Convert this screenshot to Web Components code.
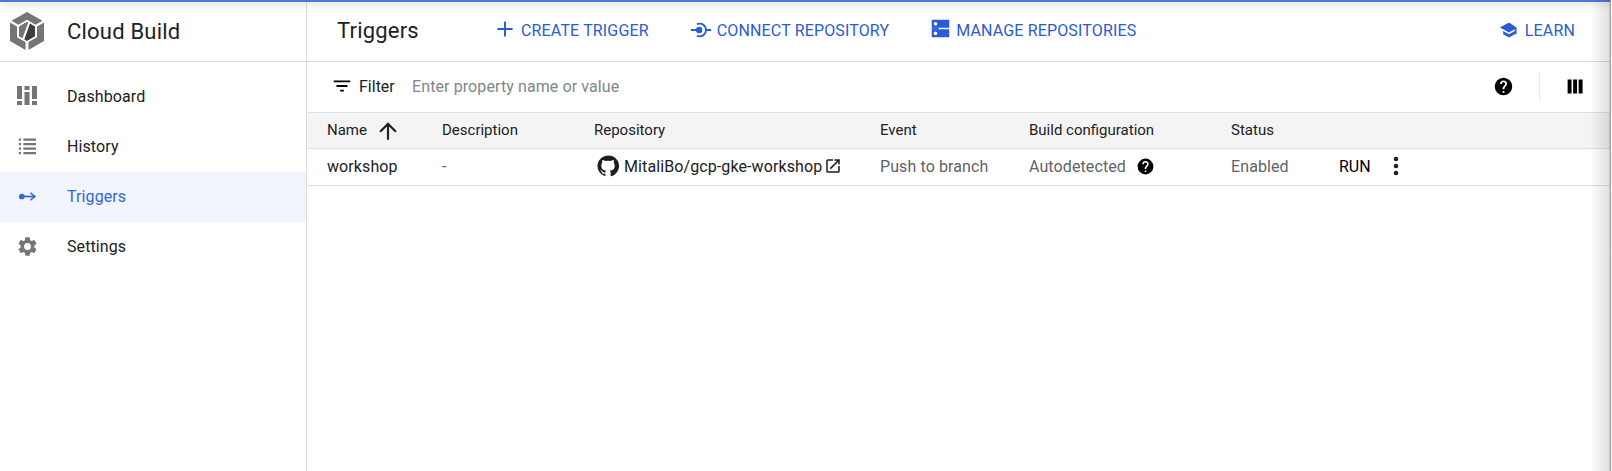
<!DOCTYPE html>
<html>
<head>
<meta charset="utf-8">
<style>
    html, body { margin: 0; height: 100%; background: #fff; overflow: hidden; }
    body { font-family: Roboto, "Liberation Sans", sans-serif; }
</style>
</head>
<body>
<gcb-app>
    <gcb-sidebar slot="side">
        <gcb-nav-item icon="dashboard" size="20" box="20" pad="17">Dashboard</gcb-nav-item>
        <gcb-nav-item icon="history" size="18" box="20" pad="18">History</gcb-nav-item>
        <gcb-nav-item icon="triggers" size="19" box="20" pad="18">Triggers</gcb-nav-item>
        <gcb-nav-item icon="settings" size="23" box="24" pad="16">Settings</gcb-nav-item>
    </gcb-sidebar>
    <gcb-toolbar slot="main"></gcb-toolbar>
    <gcb-filter slot="main"></gcb-filter>
    <gcb-table slot="main"></gcb-table>
</gcb-app>

<script>
const ICONS = {
    dashboard: `<path d="M0 0h5v13H0zM0 15h5v4H0zM7.500 0h5v4h-5zM7.500 6h5v13h-5zM15 0h5v13h-5zM15 15h5v4h-5z"/>`,
    history: `<path d="M1 1.800h2.400v2.400H1zM6 1.800h14v2.400H6zM1 6.800h2.400v2.400H1zM6 6.800h14v2.400H6zM1 11.800h2.400v2.400H1zM6 11.800h14v2.400H6zM1 16.800h2.400v2.400H1zM6 16.800h14v2.400H6z"/>`,
    triggers: `<circle cx="4" cy="10" r="3"/><path d="M4 9.100h14v1.800H4z"/><path d="M13.500 5.500l5.500 4.500-5.500 4.500-1-1.200 4-3.300-4-3.300z"/>`,
    settings: `<path d="M19.140 12.940c.04-.3.060-.61.060-.94s-.02-.64-.07-.94l2.030-1.580a.49.49 0 0 0 .12-.61l-1.920-3.320a.49.49 0 0 0-.59-.22l-2.390.96a7 7 0 0 0-1.620-.94l-.36-2.540a.48.480 0 0 0-.48-.41h-3.840a.48.480 0 0 0-.47.41l-.36 2.540c-.59.24-1.130.57-1.620.94l-2.390-.96a.49.49 0 0 0-.59.22L2.740 8.870a.48.480 0 0 0 .12.61l2.030 1.580c-.05.3-.09.63-.09.94s.02.64.07.94l-2.030 1.580a.49.49 0 0 0-.12.61l1.920 3.320c.12.22.37.29.59.22l2.390-.96c.5.38 1.030.7 1.620.94l.36 2.540c.05.24.24.41.48.41h3.840c.24 0 .44-.17.47-.41l.36-2.540a7 7 0 0 0 1.620-.94l2.390.96c.22.08.47 0 .59-.22l1.920-3.320a.48.480 0 0 0-.12-.61zM12 15.600a3.600 3.600 0 1 1 0-7.200 3.600 3.600 0 0 1 0 7.200z"/>`,
    help: `<path d="M12 2a10 10 0 1 0 0 20 10 10 0 0 0 0-20zm1 17h-2v-2h2zm2.070-7.750l-.9.920C13.450 12.900 13 13.500 13 15h-2v-.5c0-1.100.45-2.100 1.170-2.830l1.240-1.260A2 2 0 1 0 10 9H8a4 4 0 1 1 8 0c0 .88-.36 1.680-.93 2.250z"/>`,
    github: `<path d="M12 .5a11.500 11.500 0 0 0-3.640 22.410c.58.11.79-.25.79-.56v-2c-3.200.7-3.880-1.360-3.880-1.360-.52-1.330-1.280-1.690-1.280-1.690-1.040-.71.080-.7.080-.7 1.160.08 1.770 1.190 1.770 1.190 1.030 1.760 2.690 1.250 3.350.96.100-.75.400-1.250.730-1.540-2.550-.29-5.240-1.280-5.240-5.690 0-1.260.45-2.280 1.180-3.090-.12-.29-.51-1.460.11-3.050 0 0 .97-.31 3.160 1.180a11 11 0 0 1 5.760 0c2.190-1.490 3.160-1.180 3.160-1.180.63 1.590.23 2.760.11 3.050.74.81 1.180 1.830 1.180 3.090 0 4.420-2.690 5.390-5.260 5.680.41.360.78 1.060.78 2.130v3.160c0 .31.210.67.800.56A11.500 11.500 0 0 0 12 .5z"/>`,
    open: `<path d="M19 19H5V5h7V3H5a2 2 0 0 0-2 2v14a2 2 0 0 0 2 2h14a2 2 0 0 0 2-2v-7h-2zM14 3v2h3.590l-9.830 9.830 1.410 1.410L19 6.410V10h2V3z"/>`,
    plus: `<path d="M19 12.900h-6.100V19h-1.800v-6.100H5v-1.800h6.100V5h1.800v6.100H19z"/>`,
    connect: `<path d="M1 11h8v2H1zM18 11h5v2h-5z"/><circle cx="10" cy="12" r="3.500"/><path d="M7 4.800A8 8 0 1 1 7 19.200L8.100 17.500A6 6 0 1 0 8.100 6.500z"/>`,
    repos: `<path fill-rule="evenodd" d="M2 2h20v9.200H2zm4.300 2.500a2 2 0 1 0 0 4.200 2 2 0 0 0 0-4.200zM2 12.800h20V22H2zm4.300 2.500a2 2 0 1 0 0 4.200 2 2 0 0 0 0-4.200z"/><path d="M2 11h8v2H2z"/>`,
    learn: `<path d="M12 3L1 9l4 2.180v.01L12 15l7-3.820V17h2V9zM5 13.180v4L12 21l7-3.820v-4L12 17z"/>`,
    sort: `<path d="M4 12l1.410 1.410L11 7.830V20h2V7.830l5.580 5.590L20 12l-8-8z"/>`,
    filter: `<path d="M3 6h18v2H3zM6 11h12v2H6zM10 16h4v2h-4z"/>`,
    columns: `<path d="M3 4h4.500v16H3zM9.300 4h4.500v16H9.300zM15.600 4h4.500v16h-4.500z"/>`,
    more: `<circle cx="12" cy="5" r="2.300"/><circle cx="12" cy="12" r="2.300"/><circle cx="12" cy="19" r="2.300"/>`
};

function svgIcon(name, size, box = 24) {
    return `<svg width="${size}" height="${size}" viewBox="0 0 ${box} ${box}" fill="currentColor">${ICONS[name]}</svg>`;
}

class GcbApp extends HTMLElement {
    constructor() {
        super();
        this.attachShadow({ mode: "open" });
    }

    connectedCallback() {
        this.shadowRoot.innerHTML = `
            <style>
                :host {
                    display: grid;
                    grid-template-columns: 307px 1fr;
                    position: relative;
                    height: 471px;
                    overflow: hidden;
                    color: #202124;
                }

                .top {
                    position: absolute;
                    inset: 0 0 auto 0;
                    height: 2px;
                    background: #4a79d9;
                    box-shadow: 0 2px 6px rgba(60, 64, 67, .35);
                }

                .edge {
                    position: absolute;
                    inset: 0 0 0 auto;
                    width: 22px;
                    background: linear-gradient(to right, rgba(0, 0, 0, 0), rgba(0, 0, 0, .12) 88%, #5f6368 92%, #fff 95%);
                    pointer-events: none;
                }

                .side {
                    border-right: 1px solid #dadce0;
                }

                .main {
                    min-width: 0;
                }
            </style>
            <div class="side"><slot name="side"></slot></div>
            <div class="main"><slot name="main"></slot></div>
            <div class="top"></div>
            <div class="edge"></div>
        `;
    }
}

class GcbSidebar extends HTMLElement {
    constructor() {
        super();
        this.attachShadow({ mode: "open" });
    }

    connectedCallback() {
        this.shadowRoot.innerHTML = `
            <style>
                :host {
                    display: block;
                }

                .brand {
                    height: 62px;
                    box-sizing: border-box;
                    border-bottom: 1px solid #dadce0;
                    display: flex;
                    align-items: center;
                    padding: 1px 0 0 9px;
                    font-size: 22px;
                    letter-spacing: .2px;
                    color: #202124;
                }

                .brand svg {
                    margin-right: 22px;
                    flex: none;
                }

                nav {
                    padding-top: 10px;
                }
            </style>
            <div class="brand">
                <svg width="36" height="40" viewBox="0 0 36 40" fill="#757575">
                    <path d="M18 1l15.500 8.700-7 4L18 8.800 9.500 13.700l-7-4z"/>
                    <path d="M1 11.500l7 4v10.700l8.500 4.900V39L1 30z"/>
                    <path d="M35 11.500l-7 4v10.700l-8.500 4.900V39L35 30z"/>
                    <path d="M18 10.800l1.300.8-5.800 15.700-3.500-2V15.400z"/>
                    <path fill="#3c3c3c" d="M21 12.600l5 2.800v9.900l-8 4.600-2.700-1.500z"/>
                </svg>
                <span>Cloud Build</span>
            </div>
            <nav><slot></slot></nav>
        `;
    }
}

class GcbNavItem extends HTMLElement {
    constructor() {
        super();
        this.attachShadow({ mode: "open" });
    }

    connectedCallback() {
        const name = this.getAttribute("icon");
        const active = name === "triggers";
        const icon = svgIcon(name, this.getAttribute("size"), this.getAttribute("box"));
        this.shadowRoot.innerHTML = `
            <style>
                :host {
                    display: flex;
                    align-items: center;
                    height: 50px;
                    box-sizing: border-box;
                    padding-bottom: 2px;
                    font-size: 16px;
                    letter-spacing: .1px;
                    color: ${active ? "#3367d6" : "#202124"};
                    background: ${active ? "#f0f4fc" : "transparent"};
                }

                .ic {
                    width: 67px;
                    flex: none;
                    box-sizing: border-box;
                    padding-left: ${this.getAttribute("pad")}px;
                    display: flex;
                    color: ${active ? "#3367d6" : "#757575"};
                }
            </style>
            <span class="ic">${icon}</span>
            <slot></slot>
        `;
    }
}

class GcbAction extends HTMLElement {
    constructor() {
        super();
        this.attachShadow({ mode: "open" });
    }

    connectedCallback() {
        const size = this.getAttribute("size") || 20;
        const gap = this.getAttribute("gap") || 5;
        const lift = this.getAttribute("lift") || 1;
        this.shadowRoot.innerHTML = `
            <style>
                :host {
                    display: inline-flex;
                    align-items: center;
                    gap: ${gap}px;
                    font-size: 16px;
                    letter-spacing: .15px;
                    white-space: nowrap;
                    color: #2a5bd7;
                }

                svg {
                    flex: none;
                    margin-bottom: ${lift * 2}px;
                }
            </style>
            ${svgIcon(this.getAttribute("icon"), size)}
            <slot></slot>
        `;
    }
}

class GcbToolbar extends HTMLElement {
    constructor() {
        super();
        this.attachShadow({ mode: "open" });
    }

    connectedCallback() {
        this.shadowRoot.innerHTML = `
            <style>
                :host {
                    display: flex;
                    align-items: center;
                    height: 62px;
                    box-sizing: border-box;
                    border-bottom: 1px solid #dadce0;
                    padding: 0 37px 0 30px;
                }

                h1 {
                    margin: 0;
                    font-size: 22px;
                    font-weight: 400;
                    letter-spacing: .2px;
                    width: 155px;
                    flex: none;
                    color: #202124;
                }

                .actions {
                    display: flex;
                    align-items: center;
                    gap: 41px;
                    flex: 1;
                }
            </style>
            <h1>Triggers</h1>
            <div class="actions">
                <gcb-action icon="plus" size="26" gap="3" lift="2">CREATE TRIGGER</gcb-action>
                <gcb-action icon="connect" size="22">CONNECT REPOSITORY</gcb-action>
                <gcb-action icon="repos" size="21" lift="2">MANAGE REPOSITORIES</gcb-action>
            </div>
            <gcb-action icon="learn" size="20" gap="6">LEARN</gcb-action>
        `;
    }
}

class GcbFilter extends HTMLElement {
    constructor() {
        super();
        this.attachShadow({ mode: "open" });
    }

    connectedCallback() {
        this.shadowRoot.innerHTML = `
            <style>
                :host {
                    display: flex;
                    align-items: center;
                    height: 50px;
                    box-sizing: border-box;
                    padding: 0 26px 2px 24px;
                    font-size: 16px;
                    color: #202124;
                }

                .lbl {
                    display: flex;
                    align-items: center;
                    gap: 6px;
                    width: 81px;
                    flex: none;
                }

                .hint {
                    flex: 1;
                    color: #80868b;
                    letter-spacing: .1px;
                }

                .sep {
                    width: 1px;
                    height: 30px;
                    background: #e8eaed;
                    margin: 0 25px;
                }

                svg {
                    display: block;
                    color: #000;
                }
            </style>
            <span class="lbl">${svgIcon("filter", 22)}Filter</span>
            <span class="hint">Enter property name or value</span>
            ${svgIcon("help", 21)}
            <span class="sep"></span>
            ${svgIcon("columns", 21)}
        `;
    }
}

class GcbTable extends HTMLElement {
    constructor() {
        super();
        this.attachShadow({ mode: "open" });
    }

    connectedCallback() {
        this.shadowRoot.innerHTML = `
            <style>
                :host {
                    display: block;
                }

                .row {
                    display: grid;
                    grid-template-columns: 115px 152px 286px 149px 202px 108px 1fr;
                    align-items: center;
                    padding-left: 20px;
                    box-sizing: border-box;
                    border-bottom: 1px solid #e0e0e0;
                    height: 37px;
                }

                .head {
                    background: #f4f4f4;
                    border-top: 1px solid #e0e0e0;
                    color: #202124;
                    font-size: 15px;
                    padding-bottom: 2px;
                }

                .name {
                    display: flex;
                    align-items: center;
                    gap: 8px;
                }

                .name svg {
                    margin-top: 2px;
                }

                .body {
                    font-size: 16px;
                    letter-spacing: .1px;
                    color: #5f6368;
                    padding-bottom: 2px;
                }

                .dark {
                    color: #202124;
                }

                .repo {
                    display: flex;
                    align-items: center;
                    padding-left: 3px;
                    color: #202124;
                    white-space: nowrap;
                }

                .repo svg {
                    flex: none;
                    color: #1b1f23;
                }

                .repo .gh {
                    margin-right: 5px;
                }

                .repo .ext {
                    margin-left: 2px;
                }

                .cfg {
                    display: flex;
                    align-items: center;
                    gap: 10px;
                }

                .cfg svg {
                    color: #000;
                }

                .run {
                    display: flex;
                    align-items: center;
                    color: #000;
                    letter-spacing: 0;
                    gap: 13px;
                }

                .run svg {
                    color: #202124;
                }

                svg {
                    display: block;
                }
            </style>
            <div class="row head">
                <span class="name">Name ${svgIcon("sort", 26)}</span>
                <span>Description</span>
                <span>Repository</span>
                <span>Event</span>
                <span>Build configuration</span>
                <span>Status</span>
                <span></span>
            </div>
            <div class="row body">
                <span class="dark">workshop</span>
                <span>-</span>
                <span class="repo"><span class="gh">${svgIcon("github", 22)}</span>MitaliBo/gcp-gke-workshop<span class="ext">${svgIcon("open", 18)}</span></span>
                <span>Push to branch</span>
                <span class="cfg">Autodetected ${svgIcon("help", 19)}</span>
                <span>Enabled</span>
                <span class="run">RUN ${svgIcon("more", 24)}</span>
            </div>
        `;
    }
}

customElements.define("gcb-app", GcbApp);
customElements.define("gcb-sidebar", GcbSidebar);
customElements.define("gcb-nav-item", GcbNavItem);
customElements.define("gcb-action", GcbAction);
customElements.define("gcb-toolbar", GcbToolbar);
customElements.define("gcb-filter", GcbFilter);
customElements.define("gcb-table", GcbTable);
</script>
</body>
</html>
